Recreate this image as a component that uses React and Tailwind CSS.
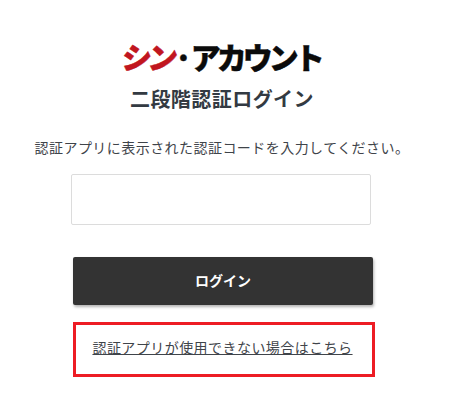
const jp = "font-['Noto_Sans_CJK_JP','Liberation_Sans',sans-serif]"

export default function App() {
  return (
    <div className={`${jp} w-[450px] h-[406px] bg-white overflow-hidden flex flex-col items-start`}>
      <div className="w-[443px] pt-[37px] flex justify-center">
        <h1 className="h-[38px] leading-[38px] text-[30px] font-black text-[#0b0b0b] tracking-[-4px] whitespace-nowrap [-webkit-text-stroke:0.4px]">
          <span className="text-[#c1161f] inline-block -skew-x-6">シン</span>
          <span className="tracking-[-2px]">·</span>
          <span>アカウント</span>
        </h1>
      </div>
      <h2 className="w-[444px] mt-[9px] text-center text-[20px] leading-[30px] font-bold text-[#333a42] tracking-[0.45px]">
        二段階認証ログイン
      </h2>
      <p className="w-[444px] mt-[21px] text-center text-[14px] leading-[24px] text-[#3f444a] tracking-[0.45px] whitespace-nowrap">
        認証アプリに表示された認証コードを入力してください。
      </p>
      <input
        type="text"
        className="ml-[71px] mt-[15px] w-[300px] h-[51px] rounded-[2px] border border-[#dcdcdc] bg-white outline-none"
      />
      <button className="ml-[73px] mt-[32px] w-[300px] h-[48px] pb-[1px] rounded-[2px] bg-[#333333] text-white text-[14px] font-bold shadow-[1px_2px_3px_rgba(0,0,0,0.3)]">
        ログイン
      </button>
      <div className="ml-[73px] mt-[17px] w-[302px] h-[55px] pb-[6px] pr-[3px] border-[3px] border-[#ed1c24] flex items-center justify-center">
        <a href="#" className="text-[14px] leading-[20px] text-[#3f444a] underline tracking-[0.45px] whitespace-nowrap">
          認証アプリが使用できない場合はこちら
        </a>
      </div>
    </div>
  )
}
